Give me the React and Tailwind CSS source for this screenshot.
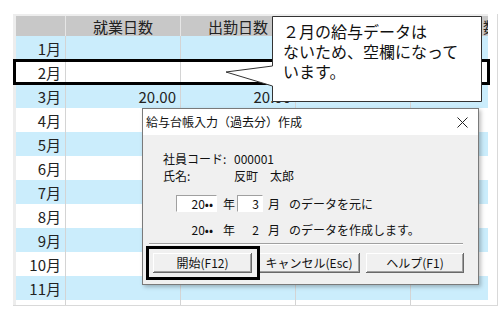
const months = ['1月', '2月', '3月', '4月', '5月', '6月', '7月', '8月', '9月', '10月', '11月', '12月']
const headers = ['就業日数', '出勤日数', '出勤時間', '欠勤日数']
const values = { '3月': ['20.00', '20.00', '', ''] }

function Grid() {
  return (
    <div className="w-[475px] h-[291px] overflow-hidden border-l-[3px] border-t-2 border-[#ededed] bg-white">
      <div className="flex h-[20px] bg-[#c8c8c8]">
        <div className="w-[50px] shrink-0 border-r border-[#e6e6e6]" />
        {headers.map((h) => (
          <div key={h} className="w-[115px] shrink-0 border-r border-[#e6e6e6] flex items-center justify-center text-[15px] leading-none text-[#222]">
            {h}
          </div>
        ))}
      </div>
      {months.map((m, i) => (
        <div key={m} className={`flex h-[24px] ${i % 2 === 0 ? 'bg-[#cbedfc]' : 'bg-white'}`}>
          <div className="w-[50px] shrink-0 border-r border-[#d4d4d4] flex items-center justify-end pr-[4px] text-[15px] leading-none text-[#222]">
            {m}
          </div>
          {headers.map((h, j) => (
            <div key={h} className="w-[115px] shrink-0 border-r border-[#d4d4d4] flex items-center justify-end pr-[4px] text-[15px] leading-none text-[#222]">
              {values[m] ? values[m][j] : ''}
            </div>
          ))}
        </div>
      ))}
    </div>
  )
}

function Callout() {
  return (
    <>
      <svg className="absolute left-0 top-0 pointer-events-none" width="503" height="312" viewBox="0 0 503 312">
        <path
          d="M272.5 16.5 H481.5 V101.5 H272.5 V86 L226 72 L272.5 66 Z"
          fill="#ffffff"
          stroke="#333333"
          strokeWidth="1"
        />
      </svg>
      <div className="absolute left-[283px] top-[21px] text-[16px] leading-[20px] text-[#111]">
        <p>２月の給与データは</p>
        <p>ないため、空欄になって</p>
        <p>います。</p>
      </div>
    </>
  )
}

const btn =
  'h-[20px] bg-[#f0f0f0] flex items-center justify-center text-[12px] leading-none text-[#111] shadow-[inset_-1px_-1px_#696969,inset_1px_1px_#ffffff,inset_-2px_-2px_#a0a0a0]'

function Dialog() {
  return (
    <div className="absolute left-[142px] top-[108px] w-[337px] h-[177px] border border-[#7a7a7a] bg-[#f0f0f0] shadow-[2px_2px_4px_rgba(0,0,0,0.25)] flex flex-col text-[12px] text-[#111]">
      <div className="h-[26px] bg-white flex items-center justify-between pl-[3px] pr-[10px] shrink-0">
        <span className="leading-none">給与台帳入力（過去分）作成</span>
        <svg width="11" height="11" viewBox="0 0 11 11">
          <path d="M0.5 0.5 L10.5 10.5 M10.5 0.5 L0.5 10.5" stroke="#222" strokeWidth="1" />
        </svg>
      </div>

      <div className="relative flex-1 pt-[15px]">
        <div className="pl-[20px] leading-[17px]">
          <div className="flex">
            <span className="w-[71px]">社員コード:</span>
            <span>000001</span>
          </div>
          <div className="flex">
            <span className="w-[71px]">氏名:</span>
            <span>反町　太郎</span>
          </div>
        </div>

        <div className="mt-[11px] pl-[33px] flex items-center h-[17px] leading-none">
          <div className="w-[41px] h-[17px] bg-white border border-t-[#a0a0a0] border-l-[#a0a0a0] border-b-white border-r-white flex items-center justify-end pr-[3px]">
            20••
          </div>
          <span className="ml-[6px]">年</span>
          <div className="ml-[2px] w-[26px] h-[17px] bg-white border border-t-[#a0a0a0] border-l-[#a0a0a0] border-b-white border-r-white flex items-center justify-end pr-[3px]">
            3
          </div>
          <span className="ml-[5px]">月</span>
          <span className="ml-[9px]">のデータを元に</span>
        </div>

        <div className="mt-[11px] pl-[33px] flex items-center h-[14px] leading-none">
          <div className="w-[41px] flex justify-end pr-[4px]">20••</div>
          <span className="ml-[6px]">年</span>
          <div className="ml-[2px] w-[26px] flex justify-end pr-[4px]">2</div>
          <span className="ml-[5px]">月</span>
          <span className="ml-[9px]">のデータを作成します。</span>
        </div>

        <div className="mt-[6px] ml-[6px] mr-[15px] h-[2px] border-t border-b border-t-[#a0a0a0] border-b-white" />

        <div className="mt-[8px] pl-[10px] flex gap-[6px]">
          <div className={`${btn} w-[99px]`}>開始(F12)</div>
          <div className={`${btn} w-[102px]`}>キャンセル(Esc)</div>
          <div className={`${btn} w-[98px]`}>ヘルプ(F1)</div>
        </div>

        <div className="absolute left-[3px] top-[111px] w-[114px] h-[34px] border-[3px] border-black" />
      </div>
    </div>
  )
}

export default function App() {
  return (
    <div className="relative w-[503px] h-[312px] bg-white overflow-hidden font-['Noto_Sans_CJK_JP','Liberation_Sans',sans-serif]">
      <div className="pt-[14px] pl-[13px]">
        <div className="w-[485px] h-[292px] border-r border-b border-[#d9d9d9]">
          <Grid />
        </div>
      </div>

      {/* 2月の行を囲む枠 */}
      <div className="absolute left-[13px] top-[59px] w-[477px] h-[26px] border-[3px] border-black" />

      <Callout />
      <Dialog />
    </div>
  )
}
